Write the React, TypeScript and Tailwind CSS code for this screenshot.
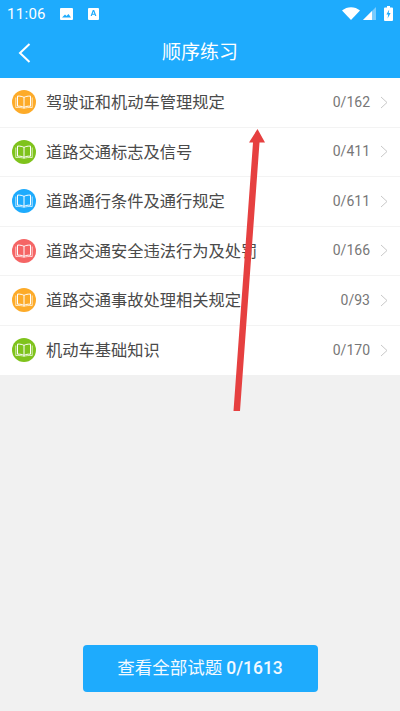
const FONT = { fontFamily: 'Roboto, "Noto Sans CJK SC", sans-serif' };

const rows = [
  { t: "驾驶证和机动车管理规定", n: "0/162", c: "bg-[#fdab29]" },
  { t: "道路交通标志及信号", n: "0/411", c: "bg-[#7fc31c]" },
  { t: "道路通行条件及通行规定", n: "0/611", c: "bg-[#1eabfd]" },
  { t: "道路交通安全违法行为及处罚", n: "0/166", c: "bg-[#f56565]" },
  { t: "道路交通事故处理相关规定", n: "0/93", c: "bg-[#fdab29]" },
  { t: "机动车基础知识", n: "0/170", c: "bg-[#7fc31c]" },
];

function Book() {
  return (
    <svg width="18" height="14" viewBox="0 0 18 14" fill="none" stroke="white" strokeWidth="1">
      <path d="M9 2.4C7.4 1.4 5 1 2.5 1.1V11.2C5 11 7.4 11.4 9 12.4C10.6 11.4 13 11 15.5 11.2V1.1C13 1 10.6 1.4 9 2.4Z" />
      <path d="M9 2.4V12.4" />
      <path d="M0.8 2.5V12.6C4 12.3 7 12.6 9 13.4C11 12.6 14 12.3 17.2 12.6V2.5" strokeWidth="0.7" />
    </svg>
  );
}

function Row({ t, n, c, last }: { t: string; n: string; c: string; last: boolean }) {
  return (
    <div className={`flex h-[49.5px] items-center bg-white pl-3 pr-3 ${last ? "" : "border-b border-[#f3f3f3]"}`}>
      <div className={`flex h-6 w-6 shrink-0 items-center justify-center rounded-full ${c}`}>
        <Book />
      </div>
      <div className="ml-[10px] flex-1 pt-[2px] text-[16.25px] text-[#4a4a4a]">{t}</div>
      <div className="text-[14px] text-[#777777]">{n}</div>
      <svg className="ml-[10px]" width="8" height="13" viewBox="0 0 8 13" fill="none" stroke="#c8c8c8" strokeWidth="1">
        <path d="M1 1L7 6.5L1 12" />
      </svg>
    </div>
  );
}

export default function App() {
  return (
    <div className="relative flex h-[711px] w-[400px] flex-col overflow-hidden bg-[#f1f1f1]" style={FONT}>
      <div className="h-[78px] bg-[#1eabfd] text-white">
        <div className="flex h-[27px] items-center pl-[7px] pr-[7px]">
          <span className="pt-[2px] text-[15px] tracking-[0.3px]">11:06</span>
          <svg className="ml-[14px]" width="13" height="12" viewBox="0 0 13 12">
            <path fill="white" fillRule="evenodd" d="M1 0H12A1 1 0 0 1 13 1V11A1 1 0 0 1 12 12H1A1 1 0 0 1 0 11V1A1 1 0 0 1 1 0ZM2 9.5H11L8.5 6L6.5 8L5 6.5Z" />
          </svg>
          <svg className="ml-[15px]" width="11" height="12" viewBox="0 0 11 12">
            <path fill="white" fillRule="evenodd" d="M1 0H10A1 1 0 0 1 11 1V11A1 1 0 0 1 10 12H1A1 1 0 0 1 0 11V1A1 1 0 0 1 1 0ZM4.8 2L2.6 8H3.9L4.3 6.8H6.7L7.1 8H8.4L6.2 2ZM4.7 5.7H6.3L5.5 3.4Z" />
          </svg>
          <div className="flex-1" />
          <svg width="18" height="13" viewBox="0 0 18 13">
            <path fill="white" d="M0 3.5C5 -1 13 -1 18 3.5L9 13Z" />
          </svg>
          <svg className="ml-[3px]" width="13" height="13" viewBox="0 0 13 13">
            <path fill="white" fillOpacity="0.4" d="M13 0V13H0Z" />
            <path fill="white" d="M9 4V13H0Z" />
          </svg>
          <svg className="ml-[8px]" width="9" height="15" viewBox="0 0 9 15">
            <path fill="white" fillRule="evenodd" d="M3 0H6V1.5H8A1 1 0 0 1 9 2.5V14A1 1 0 0 1 8 15H1A1 1 0 0 1 0 14V2.5A1 1 0 0 1 1 1.5H3ZM5.2 3.5L2.4 8.6H4.2L3.6 12.5L6.6 7H4.7Z" />
          </svg>
        </div>
        <div className="relative flex h-[51px] items-center justify-center">
          <svg className="absolute left-[18px] top-[16px]" width="13" height="20" viewBox="0 0 13 20" fill="none" stroke="white" strokeWidth="2">
            <path d="M11.5 1L2 10L11.5 19" />
          </svg>
          <span className="pt-[2px] text-[19px]">顺序练习</span>
        </div>
      </div>

      <div>
        {rows.map((r, i) => (
          <Row key={r.t} {...r} last={i === rows.length - 1} />
        ))}
      </div>

      <div className="flex-1" />

      <div className="mb-[19px] flex justify-center">
        <div className="flex h-[47px] w-[235px] items-center justify-center rounded-[4px] bg-[#1eabfd] text-[17.5px] font-medium text-[#f2f9ff]">
          <span className="font-normal">查看全部试题</span>
          <span className="ml-1">0/1613</span>
        </div>
      </div>

      <svg className="absolute left-0 top-0" width="400" height="711" viewBox="0 0 400 711">
        <path fill="#e64040" d="M233.5 411L240 411L259.5 142.5L265 142.5L257.5 129L249 142.5L253 142.5Z" />
      </svg>
    </div>
  );
}
